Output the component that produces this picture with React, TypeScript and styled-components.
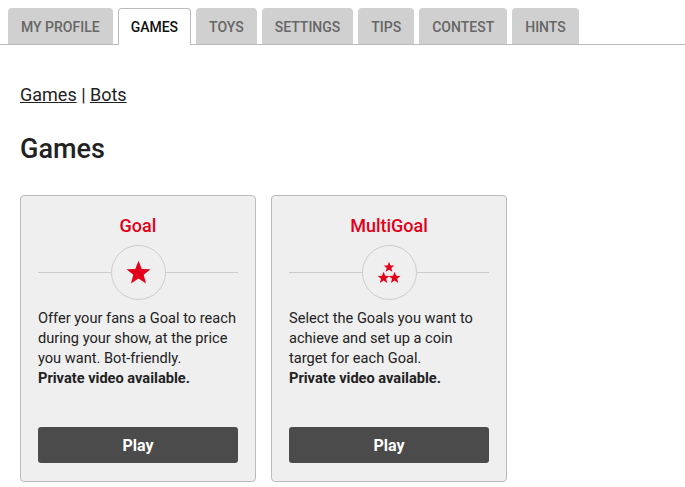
import styled, { createGlobalStyle } from 'styled-components'

const GlobalStyle = createGlobalStyle`
   body {
      margin: 0;
      background: #fff;
      font-family: Roboto, "Liberation Sans", Arial, sans-serif;
      color: #222;
   }
`

const TabBar = styled.nav`
   display: flex;
   gap: 5px;
   padding: 8px 8px 0;
   border-bottom: 1px solid #bbb;
   height: 36px;
`

const Tab = styled.div<{ $active?: boolean }>`
   display: flex;
   align-items: center;
   justify-content: center;
   padding: 0 12px;
   box-sizing: border-box;
   font-size: 14px;
   font-weight: 500;
   border-radius: 4px 4px 0 0;
   color: ${p => (p.$active ? '#111' : '#666')};
   background: ${p => (p.$active ? '#fff' : '#d0d0d0')};
   border: 1px solid ${p => (p.$active ? '#bbb' : 'transparent')};
   border-bottom: none;
   height: ${p => (p.$active ? '37px' : '36px')};
   cursor: pointer;
`

const Content = styled.main`
   padding: 39px 20px 0;
`

const Breadcrumb = styled.div`
   font-size: 18px;
   line-height: 22px;

   a {
      color: #222;
      text-decoration: underline;
   }
`

const Title = styled.h1`
   font-size: 27px;
   font-weight: 500;
   margin: 26px 0 29px;
   line-height: 34px;
`

const Cards = styled.div`
   display: flex;
   gap: 15px;
`

const Card = styled.div`
   width: 236px;
   height: 287px;
   box-sizing: border-box;
   background: #efefef;
   border: 1px solid #bbb;
   border-radius: 4px;
   padding: 18px 17px 18px;
   display: flex;
   flex-direction: column;
`

const CardTitle = styled.h2`
   margin: 0;
   text-align: center;
   color: #e2001a;
   font-size: 18px;
   font-weight: 500;
   line-height: 24px;
`

const Divider = styled.div`
   display: flex;
   align-items: center;
   margin: 7px 0 8px;

   &::before,
   &::after {
      content: '';
      flex: 1;
      height: 1px;
      background: #ccc;
   }
`

const Badge = styled.div`
   width: 55px;
   height: 55px;
   box-sizing: border-box;
   border: 1px solid #ccc;
   border-radius: 50%;
   display: flex;
   align-items: center;
   justify-content: center;
`

const Description = styled.p`
   margin: 0;
   font-size: 14.6px;
   line-height: 20px;
   color: #222;

   strong {
      font-weight: 700;
   }
`

const PlayButton = styled.button`
   margin-top: auto;
   height: 36px;
   width: 100%;
   border: none;
   border-radius: 3px;
   background: #4b4b4b;
   color: #fff;
   font-family: inherit;
   font-size: 16px;
   font-weight: 700;
   cursor: pointer;
`

const STAR = 'M12 1.5l2.9 7.3 7.8.4-6.1 4.9 2.1 7.6L12 17.4l-6.7 4.3 2.1-7.6-6.1-4.9 7.8-.4z'

const StarIcon = () => (
  <svg width="27" height="27" viewBox="0 0 24 24">
    <path d={STAR} fill="#e2001a" />
  </svg>
)

const MultiStarIcon = () => (
  <svg width="26" height="24" viewBox="0 0 26 24">
    <g fill="#e2001a">
      <path d={STAR} transform="translate(7 0) scale(0.5)" />
      <path d={STAR} transform="translate(1 10) scale(0.55)" />
      <path d={STAR} transform="translate(12 10) scale(0.55)" />
    </g>
  </svg>
)

const tabs = ['MY PROFILE', 'GAMES', 'TOYS', 'SETTINGS', 'TIPS', 'CONTEST', 'HINTS']

const games = [
  {
    name: 'Goal',
    icon: <StarIcon />,
    text: 'Offer your fans a Goal to reach during your show, at the price you want. Bot-friendly.'
  },
  {
    name: 'MultiGoal',
    icon: <MultiStarIcon />,
    text: 'Select the Goals you want to achieve and set up a coin target for each Goal.'
  }
]

export default function App() {
  return (
    <>
      <GlobalStyle />
      <TabBar>
        {tabs.map(t => (
          <Tab key={t} $active={t === 'GAMES'}>{t}</Tab>
        ))}
      </TabBar>
      <Content>
        <Breadcrumb>
          <a href="#">Games</a> | <a href="#">Bots</a>
        </Breadcrumb>
        <Title>Games</Title>
        <Cards>
          {games.map(g => (
            <Card key={g.name}>
              <CardTitle>{g.name}</CardTitle>
              <Divider>
                <Badge>{g.icon}</Badge>
              </Divider>
              <Description>
                {g.text}
                <br />
                <strong>Private video available.</strong>
              </Description>
              <PlayButton>Play</PlayButton>
            </Card>
          ))}
        </Cards>
      </Content>
    </>
  )
}
